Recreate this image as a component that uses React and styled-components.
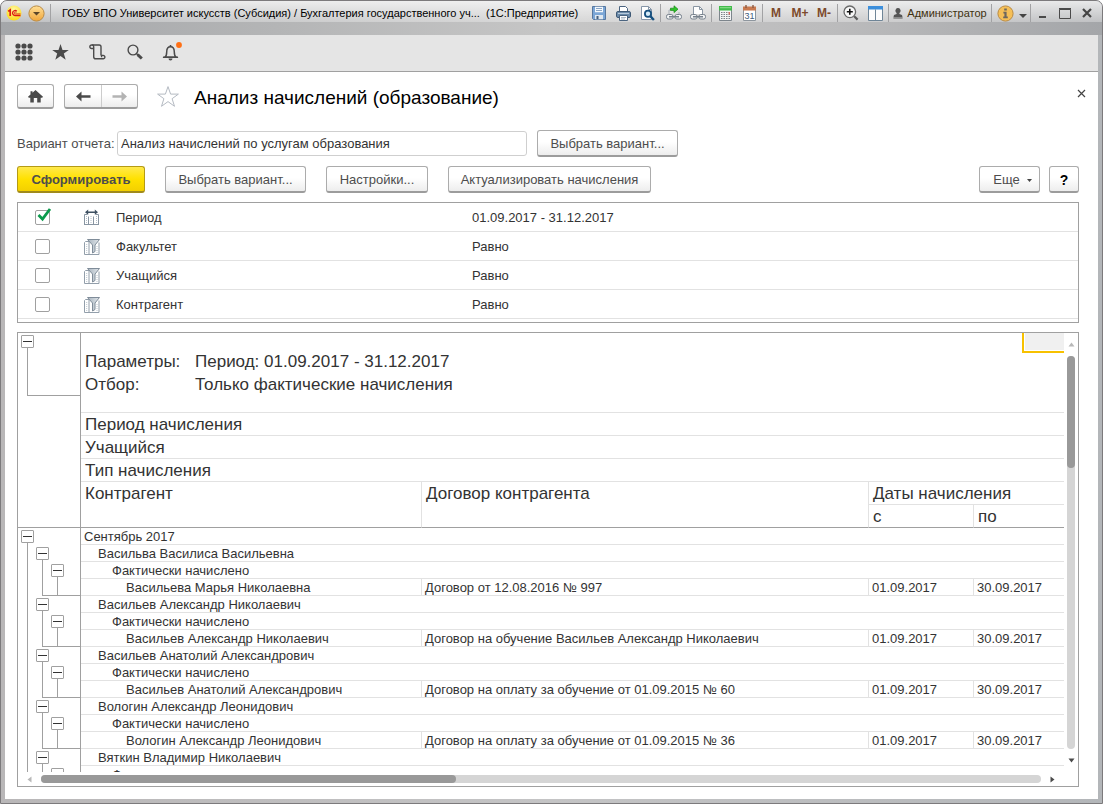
import React, { useState } from 'react';
import styled, { createGlobalStyle, css } from 'styled-components';

const colors = {
  text: '#333333',
  muted: '#4d4d4d',
  border: '#a0a0a0',
  line: '#e2e2e2',
  icon: '#4a4a4a',
};

const GlobalStyle = createGlobalStyle`
  *, *::before, *::after {
    box-sizing: border-box;
  }
  body {
    margin: 0;
    background: #ffffff;
    color: ${colors.text};
    font: 13px/16px "Liberation Sans", Arial, sans-serif;
  }
  button, input {
    font: inherit;
    color: inherit;
    margin: 0;
  }
  svg {
    display: block;
  }
`;

const Window = styled.div`
  display: flex;
  flex-direction: column;
  height: 100vh;
  min-height: 480px;
  padding: 0 4px 4px;
  border: 1px solid #7c7a7c;
  border-radius: 7px 7px 0 0;
  background: linear-gradient(90deg, #b9b7b8, #c4c4c5 50%, #b3b6b9);
  overflow: hidden;
`;

/* title bar */

const TitleBar = styled.header`
  display: flex;
  align-items: flex-start;
  flex: none;
  height: 34px;
  margin: 0 -4px;
  padding: 0 4px;
  color: #1a1a1a;
  font-size: 11px;
  background:
    linear-gradient(rgba(255, 255, 255, 0.75), rgba(255, 255, 255, 0.3)) 0 0 / 100% 21px no-repeat,
    linear-gradient(90deg, #a4a6a9, #b4b5b6 25%, #c6c6c6 50%, #bcbcbd 75%, #a4a6a9);
`;

const BarGroup = styled.div`
  display: flex;
  align-items: center;
  flex: none;
  height: 24px;
`;

const WindowTitle = styled.h1`
  flex: 1;
  min-width: 0;
  margin: 0;
  padding-left: 10px;
  overflow: hidden;
  white-space: nowrap;
  text-overflow: ellipsis;
  color: #000000;
  font-size: 11px;
  font-weight: 400;
  line-height: 24px;
`;

const Separator = styled.span`
  width: 1px;
  height: 18px;
  margin: 0 1px;
  background: #a2a2a4;
`;

const BarButton = styled.button`
  display: flex;
  align-items: center;
  justify-content: center;
  gap: 4px;
  width: ${props => props.$width || 24}px;
  height: 24px;
  padding: 0;
  border: 0;
  background: none;
  color: ${props => props.$color || 'inherit'};
  white-space: nowrap;
`;

const MemoryButton = styled(BarButton)`
  color: #7d4a2c;
  font-size: 12px;
  font-weight: 700;
`;

/* sections bar */

const SectionBar = styled.nav`
  display: flex;
  align-items: center;
  flex: none;
  height: 37px;
  padding-bottom: 2px;
  border-bottom: 1px solid ${colors.border};
  background: #e5e5e5;
`;

const SectionButton = styled.button`
  display: flex;
  align-items: center;
  justify-content: center;
  width: 37px;
  height: 32px;
  padding: 0;
  border: 0;
  background: none;
`;

/* form */

const Form = styled.main`
  display: flex;
  flex-direction: column;
  flex: 1;
  min-height: 0;
  padding: 12px 19px 12px 12px;
  background: #ffffff;
`;

const HeadRow = styled.div`
  display: flex;
  align-items: center;
  flex: none;
  height: 25px;
  margin-right: -7px;
`;

const buttonLook = css`
  border: 1px solid #acacac;
  border-bottom: 2px solid #9c9c9c;
  border-radius: 3px;
  background: linear-gradient(#ffffff 45%, #ededed);
`;

const IconButton = styled.button`
  ${buttonLook}
  display: flex;
  align-items: center;
  justify-content: center;
  width: 37px;
  height: 25px;
  padding: 0;
`;

const History = styled.div`
  ${buttonLook}
  display: flex;
  height: 25px;
  margin-left: 10px;
`;

const HistoryButton = styled.button`
  display: flex;
  align-items: center;
  justify-content: center;
  width: 36px;
  padding: 0;
  border: 0;
  background: none;
  & + & {
    border-left: 1px solid #cccccc;
  }
`;

const PlainButton = styled.button`
  display: flex;
  padding: 0;
  border: 0;
  background: none;
`;

const FavoriteButton = styled(PlainButton)`
  margin-left: 18px;
`;

const CloseFormButton = styled(PlainButton)`
  align-self: flex-start;
  padding-top: 5px;
`;

const FormTitle = styled.h2`
  flex: 1;
  margin: 0 0 0 14px;
  padding-top: 2px;
  color: #000000;
  font-size: 19px;
  font-weight: 400;
  line-height: 24px;
  white-space: nowrap;
`;

const VariantRow = styled.div`
  display: flex;
  align-items: center;
  flex: none;
  margin-top: 21px;
  color: ${colors.muted};
`;

const VariantLabel = styled.label`
  flex: none;
  width: 100px;
  white-space: nowrap;
`;

const VariantInput = styled.input`
  width: 410px;
  height: 25px;
  margin-right: 10px;
  padding: 0 3px;
  border: 1px solid #cfcfcf;
  border-radius: 3px;
  color: ${colors.text};
  background: #ffffff;
`;

const CommandRow = styled.div`
  display: flex;
  flex: none;
  gap: 20px;
  margin-top: 9px;
`;

const CommandEnd = styled.div`
  display: flex;
  gap: 9px;
  margin-left: auto;
`;

const Button = styled.button`
  ${buttonLook}
  display: flex;
  align-items: center;
  justify-content: center;
  gap: 7px;
  flex: none;
  width: ${props => props.$width}px;
  height: 27px;
  padding: 2px 0 0;
  color: ${colors.muted};
  white-space: nowrap;
`;

const PrimaryButton = styled(Button)`
  border-color: #b59b14;
  border-bottom-color: #a08a1c;
  background: linear-gradient(#ffe94d, #ffe100 50%, #f3d000);
  font-weight: 700;
`;

const MoreButton = styled(Button)`
  padding-left: 6px;
`;

const HelpButton = styled(Button)`
  color: #000000;
  font-size: 14px;
  font-weight: 700;
`;

/* filters */

const FilterBox = styled.div`
  flex: none;
  margin-top: 9px;
  padding-bottom: 3px;
  border: 1px solid ${colors.border};
`;

const FilterTable = styled.table`
  width: 100%;
  border-spacing: 0;
  table-layout: fixed;
`;

const FilterCell = styled.td`
  width: ${props => (props.$width ? `${props.$width}px` : 'auto')};
  height: 29px;
  padding: ${props => (props.$text ? 2 : 0)}px 0 0 ${props => props.$indent || 0}px;
  border-bottom: 1px solid ${colors.line};
`;

const CheckWrap = styled.span`
  display: block;
  position: relative;
  width: 15px;
  height: 15px;
  svg {
    position: absolute;
    left: 2px;
    top: -2px;
    pointer-events: none;
  }
`;

const Checkbox = styled.input`
  display: block;
  appearance: none;
  width: 15px;
  height: 15px;
  border: 1px solid ${colors.border};
  border-radius: 2px;
  background: #ffffff;
`;

/* report */

const ReportBox = styled.section`
  display: grid;
  grid-template-columns: minmax(0, 1fr) 14px;
  grid-template-rows: minmax(0, 1fr) 14px;
  flex: 1;
  min-height: 0;
  margin-top: 9px;
  border: 1px solid ${colors.border};
`;

const ReportView = styled.div`
  position: relative;
  overflow: hidden;
`;

const ActiveCell = styled.span`
  position: absolute;
  top: 0;
  right: 0;
  width: 42px;
  height: 20px;
  border: solid #f7c100;
  border-width: 0 0 2px 2px;
  background: #f0f0f0;
  box-shadow: inset 1px -1px #ffffff;
`;

const ReportTable = styled.table`
  width: 100%;
  border-spacing: 0;
  table-layout: fixed;
`;

const TreeCell = styled.td`
  height: ${props => props.$height}px;
  padding: 0;
  border-right: 1px solid ${colors.border};
  border-bottom: ${props => (props.$last ? `1px solid ${colors.border}` : 0)};
`;

const Tree = styled.div`
  display: flex;
  height: ${props => props.$height}px;
  padding-left: 2px;
`;

const Slot = styled.div`
  display: flex;
  flex-direction: column;
  align-items: center;
  width: 15px;
`;

const Stem = styled.span`
  flex: 1;
  width: 1px;
  background: ${colors.border};
`;

// closes a group: runs down from the parent node and then right to the edge
const Branch = styled.div`
  display: flex;
  flex: 1;
  margin-left: 7px;
  padding-left: 7px;
  border: solid ${colors.border};
  border-width: 0 0 1px 1px;
`;

const Toggle = styled.button`
  display: flex;
  align-items: center;
  justify-content: center;
  width: 13px;
  height: 13px;
  margin-top: 2px;
  padding: 0;
  border: 1px solid ${colors.border};
  border-radius: 1px;
  background: #ffffff;
  &::before {
    content: '';
    width: 9px;
    height: 1px;
    background: #333333;
  }
`;

const cellLine = props => {
  if (props.$line === 'none') return 'transparent';
  return props.$line === 'dark' ? colors.border : colors.line;
};

const HeadCell = styled.th`
  height: ${props => props.$height || 23}px;
  padding: 1px 4px 0;
  border-bottom: 1px solid ${cellLine};
  border-right: ${props => (props.$divider ? `1px solid ${colors.line}` : 0)};
  font-size: 17px;
  font-weight: 400;
  line-height: 21px;
  text-align: left;
  vertical-align: top;
  white-space: nowrap;
`;

const ParamName = styled.span`
  display: inline-block;
  width: 110px;
`;

const Cell = styled.td`
  height: 17px;
  padding: 1px 0 0 ${props => 3 + (props.$level || 0) * 14}px;
  border-bottom: 1px solid ${colors.line};
  border-right: ${props => (props.$divider ? `1px solid ${colors.line}` : 0)};
  line-height: 15px;
  white-space: nowrap;
`;

const ScrollBar = styled.div`
  display: flex;
  flex-direction: ${props => (props.$vertical ? 'column' : 'row')};
  align-items: center;
`;

const ScrollButton = styled.button`
  display: flex;
  align-items: center;
  justify-content: center;
  flex: none;
  width: ${props => (props.$vertical ? 14 : 23)}px;
  height: ${props => (props.$vertical ? 23 : 14)}px;
  padding: 0;
  border: 0;
  background: none;
`;

const ScrollTrack = styled.div`
  flex: 1;
  width: ${props => (props.$vertical ? '8px' : 'auto')};
  height: ${props => (props.$vertical ? 'auto' : '8px')};
  border-radius: 4px;
  background: #d5d5d5;
`;

const ScrollThumb = styled.div`
  width: ${props => (props.$vertical ? '8px' : '41.5%')};
  height: ${props => (props.$vertical ? '28.5%' : '8px')};
  border-radius: 4px;
  background: #999999;
`;

/* icons */

const LogoIcon = () => (
  <svg width="16" height="16" viewBox="0 0 16 16">
    <defs>
      <radialGradient id="logo" cx="50%" cy="30%" r="70%">
        <stop offset="0" stopColor="#fff9a8" />
        <stop offset="1" stopColor="#fbd916" />
      </radialGradient>
    </defs>
    <circle cx="8" cy="8" r="7.5" fill="url(#logo)" />
    <path d="M2.2 6.4 4.2 5v6" fill="none" stroke="#dc1c12" strokeWidth="1.7" />
    <path d="M10.8 6.2A2.5 2.500 0 1 0 9 10.500h5.500" fill="none" stroke="#dc1c12" strokeWidth="1.3" />
    <path d="M10.200 7.700a1 1 0 1 0-.9 1.200h5.200" fill="none" stroke="#dc1c12" strokeWidth=".8" />
  </svg>
);

const MenuIcon = () => (
  <svg width="17" height="17" viewBox="0 0 17 17">
    <defs>
      <linearGradient id="menu" x1="0" y1="0" x2="0" y2="1">
        <stop offset="0" stopColor="#ffdf96" />
        <stop offset="1" stopColor="#f0a63a" />
      </linearGradient>
    </defs>
    <circle cx="8.5" cy="8.5" r="7.6" fill="url(#menu)" stroke="#b98b45" />
    <path d="M5 7h7l-3.5 3.6z" fill="#5b4628" />
  </svg>
);

const SaveIcon = () => (
  <svg width="14" height="14" viewBox="0 0 14 14">
    <path d="M.5.5h13v13h-12l-1-1z" fill="#7ba6d6" stroke="#56779f" />
    <path d="M3 .8h8v5.4H3z" fill="#f4f8fc" />
    <path d="M4 2.5h6M4 4.5h6" stroke="#8aa5c4" />
    <path d="M3 9h8v4.2H3z" fill="#dfe7ef" />
    <path d="M4.5 10h2v3h-2z" fill="#45607f" />
  </svg>
);

const PrintIcon = () => (
  <svg width="15" height="15" viewBox="0 0 15 15">
    <path d="M3.5 5.5v-5h6l2 2v3" fill="#fff" stroke="#4b6480" />
    <rect x=".5" y="5.5" width="14" height="6" rx="1.4" fill="#6d8cab" stroke="#3d5874" />
    <path d="M2 7.5h11" stroke="#b9cbdc" />
    <path d="M3.5 9.5h8v5h-8z" fill="#fff" stroke="#4b6480" />
    <path d="M5 11.5h5M5 13h4" stroke="#9aa8b8" strokeWidth=".8" />
  </svg>
);

const PreviewIcon = () => (
  <svg width="15" height="16" viewBox="0 0 15 16">
    <path d="M1.5 1.5h7l3 3v10h-10z" fill="#fff" stroke="#8696a8" />
    <path d="M8.5 1.5v3h3" fill="none" stroke="#8696a8" />
    <circle cx="8" cy="8.8" r="3.1" fill="#d5ebf8" stroke="#17507f" strokeWidth="1.8" />
    <path d="m10.3 11.2 3.6 3.8" stroke="#17507f" strokeWidth="2.4" />
  </svg>
);

const ChainIcon = () => (
  <g fill="#f2f3f4" stroke="#77818c">
    <rect x=".5" y="9.500" width="6.500" height="4.500" rx="1.800" />
    <rect x="9" y="9.500" width="6.500" height="4.500" rx="1.800" />
    <path d="M3 11.800h10" strokeWidth="1.600" />
  </g>
);

const SendLinkIcon = () => (
  <svg width="16" height="16" viewBox="0 0 16 16">
    <path d="M3 9V5h2M13 9V7" fill="none" stroke="#a9b1b9" />
    <path d="M4.5 3.2H8V.8l4 3.4-4 3.4V5.4H4.5z" fill="#2fc52a" stroke="#168714" strokeWidth=".7" />
    <ChainIcon />
  </svg>
);

const GetLinkIcon = () => (
  <svg width="16" height="16" viewBox="0 0 16 16">
    <path d="M3.5 9V1.5h6l3 3V9" fill="#fff" stroke="#8a96a3" />
    <path d="M9.5 1.5v3h3" fill="none" stroke="#8a96a3" />
    <ChainIcon />
  </svg>
);

const CalculatorIcon = () => (
  <svg width="13" height="15" viewBox="0 0 13 15">
    <path d="M.5.5h12v14H.5z" fill="#f3f4f5" stroke="#7d858c" />
    <path d="M0 0h13v4.600H0z" fill="#43bb4c" />
    <path d="M1 1h11v1.200H1z" fill="#7fdb80" />
    <path d="M2 6.5h9M2 8.5h9M2 10.5h9M2 12.5h9" stroke="#7a8188" strokeDasharray="1.5 1" />
    <path d="M9.6 6h1.4v2.6H9.6z" fill="#e0685c" />
  </svg>
);

const CalendarIcon = () => (
  <svg width="13" height="16" viewBox="0 0 13 16">
    <path d="M.5 2.5h12v13H.5z" fill="#fff" stroke="#8e969e" />
    <path d="M0 1.500h13v4H0z" fill="#c9794f" />
    <path d="M3 0v3M10 0v3" stroke="#8a5a42" strokeWidth="1.4" />
    <text x="6.5" y="13.6" textAnchor="middle" fontSize="9" fill="#3f5c7d">31</text>
  </svg>
);

const ZoomIcon = () => (
  <svg width="16" height="16" viewBox="0 0 16 16">
    <circle cx="6.8" cy="6.8" r="5.8" fill="#f8f8f8" stroke="#6a6a6a" strokeWidth="1.3" />
    <path d="M3.8 6.8h6M6.8 3.8v6" stroke="#111" strokeWidth="1.6" />
    <path d="m11.2 11.2 3.4 3.4" stroke="#5c5c5c" strokeWidth="2.2" />
  </svg>
);

const PanelsIcon = () => (
  <svg width="15" height="15" viewBox="0 0 15 15">
    <path d="M.5 1.5h14v13H.5z" fill="#fcfcfc" stroke="#6f8597" />
    <path d="M0 0h15v3.4H0z" fill="#3d8fdc" />
    <path d="M7.5 3.4V14" stroke="#6f8597" />
  </svg>
);

const UserIcon = () => (
  <svg width="10" height="11" viewBox="0 0 10 11">
    <path d="M5 0a2.5 2.7 0 0 1 1.4 5v1l2.6 1 .6 2.5H.4L1 7l2.6-1V5A2.5 2.7 0 0 1 5 0z" fill="#555" />
    <path d="M.4 10.2h9.2" stroke="#777" />
  </svg>
);

const InfoIcon = () => (
  <svg width="17" height="17" viewBox="0 0 17 17">
    <circle cx="8.5" cy="8.5" r="7.6" fill="#f5bf57" stroke="#b98b45" />
    <path d="M7.2 3.6h2.6v2H7.2zM6.4 6.8h3.2v4.8h1.2v1.6H6.2v-1.6h1.2V8.4h-1z" fill="#6d675e" />
  </svg>
);

const CaretIcon = () => (
  <svg width="8" height="12" viewBox="0 0 8 12">
    <path d="M0 7h8l-4 4z" fill="#444" />
  </svg>
);

const MinimizeIcon = () => (
  <svg width="12" height="11" viewBox="0 0 12 11">
    <path d="M2 8h7v2H2z" fill="#4a4a4a" />
  </svg>
);

const MaximizeIcon = () => (
  <svg width="12" height="11" viewBox="0 0 12 11">
    <path d="M.5 1.5h11v9H.5z" fill="none" stroke="#4a4a4a" />
    <path d="M0 .5h12" stroke="#4a4a4a" strokeWidth="2" />
  </svg>
);

const CloseIcon = () => (
  <svg width="10" height="10" viewBox="0 0 10 10">
    <path d="m1 1 8 8M9 1 1 9" stroke="#444" strokeWidth="2.2" />
  </svg>
);

const GridIcon = () => (
  <svg width="18" height="18" viewBox="0 0 18 18" fill={colors.icon}>
    {[3, 9, 15].map(y => [3, 9, 15].map(x => <circle key={`${x}-${y}`} cx={x} cy={y} r="2.6" />))}
  </svg>
);

const StarIcon = () => (
  <svg width="17" height="16" viewBox="0 0 17 16">
    <path d="m8.5 0 2 5.9h6.3l-5 3.7 1.9 6.1-5.2-3.7-5.2 3.7 1.9-6.1-5-3.7h6.3z" fill={colors.icon} />
  </svg>
);

const HistoryIcon = () => (
  <svg width="17" height="16" viewBox="0 0 17 16" fill="none" stroke={colors.icon} strokeWidth="1.4">
    <path d="M4.700 4.500H2.600a1.700 1.700 0 1 1 0-3.500h7.600c1.100 0 1.800.7 1.800 1.800v8.700" />
    <path d="M3.200 1c1 0 1.500.7 1.500 1.700v10c0 1.400.7 2.100 1.900 2.100h7.600a1.700 1.700 0 1 0 0-3.400H12.600v1.900" />
  </svg>
);

const SearchIcon = () => (
  <svg width="16" height="16" viewBox="0 0 16 16" fill="none" stroke={colors.icon}>
    <circle cx="6" cy="6" r="4.900" strokeWidth="1.400" />
    <path d="m9.400 9.400 1.600 1.600" strokeWidth="1.400" />
    <path d="m10.600 10.600 4.200 3.900" strokeWidth="3" />
  </svg>
);

const BellIcon = () => (
  <svg width="20" height="20" viewBox="0 0 20 20">
    <path d="M2.800 15.300c1.400-1 1.900-2.600 1.900-5.300 0-3.300 1.500-5.200 3.800-5.200s3.800 1.900 3.800 5.200c0 2.700.5 4.300 1.900 5.300z" fill="none" stroke={colors.icon} strokeWidth="1.500" />
    <path d="M1 15.300h15" stroke={colors.icon} strokeWidth="1.500" />
    <path d="M6.500 16.500h4a2 2 0 0 1-4 0zM7.700 3h1.600v2H7.700z" fill={colors.icon} />
    <circle cx="17" cy="3" r="2.900" fill="#ff6f14" />
  </svg>
);

const HomeIcon = () => (
  <svg width="15" height="13" viewBox="0 0 15 13" fill={colors.icon}>
    <path d="M7.500 0 15 6.800l-.8.9H12.700V12.500H9.200V8H5.800v4.500H2.300V7.700H.8L0 6.800l2.500-2.300V1.200h2v1.500z" />
  </svg>
);

const ArrowIcon = ({ flip, color }) => (
  <svg width="15" height="11" viewBox="0 0 15 11" fill={color}>
    <g transform={flip ? 'translate(15 0) scale(-1 1)' : undefined}>
      <path d="M0 5.500 5.500.500v10z" />
      <path d="M4 4.200h10.500v2.600H4z" />
    </g>
  </svg>
);

const FavoriteIcon = () => (
  <svg width="24" height="23" viewBox="0 0 24 23">
    <path d="m12 1.600 2.600 7.500h7.800l-6.300 4.600 2.400 7.600-6.500-4.700-6.500 4.700 2.400-7.600-6.300-4.600h7.800z" fill="#fff" stroke="#b4bac2" />
  </svg>
);

const CrossIcon = () => (
  <svg width="9" height="9" viewBox="0 0 9 9">
    <path d="m1 1 7 7M8 1 1 8" stroke="#444" strokeWidth="1.200" />
  </svg>
);

const SmallCaret = () => (
  <svg width="5" height="3" viewBox="0 0 5 3">
    <path d="M0 0h5L2.500 3z" fill="#444" />
  </svg>
);

const CheckIcon = () => (
  <svg width="15" height="14" viewBox="0 0 15 14">
    <path d="m1.500 7 4 4L13 1" fill="none" stroke="#0b9a4c" strokeWidth="2.800" />
  </svg>
);

const PeriodIcon = () => (
  <svg width="15" height="16" viewBox="0 0 15 16">
    <path d="M.5 4.500h14v11H.5z" fill="#fff" />
    <path d="M.5 15.500v-10h3M14.500 15.500v-10h-3M4.500 15.500v-8M9.500 15.500v-8M0 15.500h15" fill="none" stroke="#8895a2" />
    <path d="M2.500 7v8M7 7v8M12.500 7v8" stroke="#b4bec8" strokeDasharray="1 1" />
    <path d="M1 3.200 4.200.6v1.900h6.600V.6L14 3.200l-3.200 2.600V3.900H4.200v1.900z" fill="#3f5162" />
  </svg>
);

const FilterIcon = () => (
  <svg width="16" height="17" viewBox="0 0 16 17">
    <defs>
      <linearGradient id="funnel" x1="0" y1="0" x2="1" y2="0">
        <stop offset="0" stopColor="#a9b5c0" />
        <stop offset="1" stopColor="#e1e6ea" />
      </linearGradient>
    </defs>
    <path d="M.5 16.500V4.500l1-1h3.500v13zM5 16.500h10v-12" fill="#fff" stroke="#929eaa" />
    <path d="M2.700 6v10M13 8v8" stroke="#bcc5cd" strokeDasharray="1 1" />
    <path d="M3.500 1.500h12L11 7v6.500l-2.500 1.500V7z" fill="url(#funnel)" stroke="#7f8c99" />
  </svg>
);

const rotation = { up: 0, right: 90, down: 180, left: 270 };

const ScrollArrow = ({ to, color }) => (
  <svg width="7" height="7" viewBox="0 0 7 7">
    <path d="M3.500 1.500 6.500 5.500h-6z" fill={color} transform={`rotate(${rotation[to]} 3.500 3.500)`} />
  </svg>
);

/* data */

const filters = [
  { name: 'Период', value: '01.09.2017 - 31.12.2017', checked: true, Icon: PeriodIcon },
  { name: 'Факультет', value: 'Равно', Icon: FilterIcon },
  { name: 'Учащийся', value: 'Равно', Icon: FilterIcon },
  { name: 'Контрагент', value: 'Равно', Icon: FilterIcon },
];

const students = [
  { name: 'Васильва Василиса Васильевна', payer: 'Васильева Марья Николаевна', contract: 'Договор от 12.08.2016 № 997' },
  { name: 'Васильев Александр Николаевич', payer: 'Васильев Александр Николаевич', contract: 'Договор на обучение Васильев Александр Николаевич' },
  { name: 'Васильев Анатолий Александрович', payer: 'Васильев Анатолий Александрович', contract: 'Договор на оплату за обучение от 01.09.2015 № 60' },
  { name: 'Вологин Александр Леонидович', payer: 'Вологин Александр Леонидович', contract: 'Договор на оплату за обучение от 01.09.2015 № 36' },
  { name: 'Вяткин Владимир Николаевич' },
];

const StemSlot = () => <Slot><Stem /></Slot>;

const ToggleSlot = () => (
  <Slot>
    <Toggle type="button" aria-label="Свернуть" />
    <Stem />
  </Slot>
);

const TreeColumn = ({ height = 17, last, children }) => (
  <TreeCell $height={height} $last={last}>
    {children && <Tree $height={height}>{children}</Tree>}
  </TreeCell>
);

const FilterRow = ({ filter }) => {
  const [checked, setChecked] = useState(!!filter.checked);
  const { name, value, Icon } = filter;

  return (
    <tr>
      <FilterCell $width={66} $indent={17}>
        <CheckWrap>
          <Checkbox
            type="checkbox"
            id={`filter-${name}`}
            checked={checked}
            onChange={e => setChecked(e.target.checked)}
          />
          {checked && <CheckIcon />}
        </CheckWrap>
      </FilterCell>
      <FilterCell $width={32}><Icon /></FilterCell>
      <FilterCell $width={356} $text><label htmlFor={`filter-${name}`}>{name}</label></FilterCell>
      <FilterCell $text>{value}</FilterCell>
    </tr>
  );
};

const StudentRows = ({ student }) => (
  <>
    <tr>
      <TreeColumn><StemSlot /><ToggleSlot /></TreeColumn>
      <Cell colSpan={4} $level={1}>{student.name}</Cell>
    </tr>
    <tr>
      <TreeColumn><StemSlot /><StemSlot /><ToggleSlot /></TreeColumn>
      <Cell colSpan={4} $level={2}>Фактически начислено</Cell>
    </tr>
    {student.payer && (
      <tr>
        <TreeColumn><StemSlot /><Branch><StemSlot /></Branch></TreeColumn>
        <Cell $level={3} $divider>{student.payer}</Cell>
        <Cell $divider>{student.contract}</Cell>
        <Cell $divider>01.09.2017</Cell>
        <Cell>30.09.2017</Cell>
      </tr>
    )}
  </>
);

const ReportHead = () => (
  <thead>
    <tr>
      <TreeColumn><ToggleSlot /></TreeColumn>
      <HeadCell as="td" colSpan={4} $height={17} $line="none" />
    </tr>
    <tr>
      <TreeColumn height={23}><StemSlot /></TreeColumn>
      <HeadCell as="td" colSpan={4} $line="none"><ParamName>Параметры:</ParamName>Период: 01.09.2017 - 31.12.2017</HeadCell>
    </tr>
    <tr>
      <TreeColumn height={23}><Branch /></TreeColumn>
      <HeadCell as="td" colSpan={4} $line="none"><ParamName>Отбор:</ParamName>Только фактические начисления</HeadCell>
    </tr>
    <tr>
      <TreeColumn />
      <HeadCell as="td" colSpan={4} $height={17} />
    </tr>
    {['Период начисления', 'Учащийся', 'Тип начисления'].map(title => (
      <tr key={title}>
        <TreeColumn height={23} />
        <HeadCell colSpan={4}>{title}</HeadCell>
      </tr>
    ))}
    <tr>
      <TreeColumn height={23} />
      <HeadCell rowSpan={2} $line="dark" $divider>Контрагент</HeadCell>
      <HeadCell rowSpan={2} $line="dark" $divider>Договор контрагента</HeadCell>
      <HeadCell colSpan={2}>Даты начисления</HeadCell>
    </tr>
    <tr>
      <TreeColumn height={23} last />
      <HeadCell $line="dark" $divider>с</HeadCell>
      <HeadCell $line="dark">по</HeadCell>
    </tr>
  </thead>
);

const App = () => {
  const [variant, setVariant] = useState('Анализ начислений по услугам образования');

  return (
    <>
      <GlobalStyle />
      <Window>
        <TitleBar>
          <BarGroup>
            <BarButton $width={18} aria-label="1С"><LogoIcon /></BarButton>
            <BarButton $width={26} aria-label="Меню"><MenuIcon /></BarButton>
            <Separator />
          </BarGroup>
          <WindowTitle>ГОБУ ВПО Университет искусств (Субсидия) / Бухгалтерия государственного уч...  &nbsp;(1С:Предприятие)</WindowTitle>
          <BarGroup>
            <BarButton aria-label="Сохранить"><SaveIcon /></BarButton>
            <BarButton aria-label="Печать"><PrintIcon /></BarButton>
            <BarButton aria-label="Просмотр"><PreviewIcon /></BarButton>
            <Separator />
            <BarButton aria-label="Перейти по ссылке"><SendLinkIcon /></BarButton>
            <BarButton aria-label="Получить ссылку"><GetLinkIcon /></BarButton>
            <Separator />
            <BarButton aria-label="Калькулятор"><CalculatorIcon /></BarButton>
            <BarButton aria-label="Календарь"><CalendarIcon /></BarButton>
            <Separator />
            <MemoryButton>M</MemoryButton>
            <MemoryButton>M+</MemoryButton>
            <MemoryButton>M-</MemoryButton>
            <Separator />
            <BarButton aria-label="Масштаб"><ZoomIcon /></BarButton>
            <BarButton aria-label="Панели"><PanelsIcon /></BarButton>
            <Separator />
            <BarButton $width={100} $color="#40310f"><UserIcon />Администратор</BarButton>
            <Separator />
            <BarButton aria-label="О программе"><InfoIcon /></BarButton>
            <BarButton $width={12} aria-label="Ещё"><CaretIcon /></BarButton>
            <Separator />
            <BarButton $width={22} aria-label="Свернуть"><MinimizeIcon /></BarButton>
            <BarButton $width={22} aria-label="Развернуть"><MaximizeIcon /></BarButton>
            <BarButton $width={22} aria-label="Закрыть"><CloseIcon /></BarButton>
          </BarGroup>
        </TitleBar>

        <SectionBar>
          <SectionButton aria-label="Функции"><GridIcon /></SectionButton>
          <SectionButton aria-label="Избранное"><StarIcon /></SectionButton>
          <SectionButton aria-label="История"><HistoryIcon /></SectionButton>
          <SectionButton aria-label="Поиск"><SearchIcon /></SectionButton>
          <SectionButton aria-label="Оповещения"><BellIcon /></SectionButton>
        </SectionBar>

        <Form>
          <HeadRow>
            <IconButton aria-label="Домой"><HomeIcon /></IconButton>
            <History>
              <HistoryButton aria-label="Назад"><ArrowIcon color={colors.icon} /></HistoryButton>
              <HistoryButton aria-label="Вперед"><ArrowIcon flip color="#b3b3b3" /></HistoryButton>
            </History>
            <FavoriteButton aria-label="В избранное"><FavoriteIcon /></FavoriteButton>
            <FormTitle>Анализ начислений (образование)</FormTitle>
            <CloseFormButton aria-label="Закрыть"><CrossIcon /></CloseFormButton>
          </HeadRow>

          <VariantRow>
            <VariantLabel htmlFor="variant">Вариант отчета:</VariantLabel>
            <VariantInput id="variant" value={variant} onChange={e => setVariant(e.target.value)} />
            <Button $width={141}>Выбрать вариант...</Button>
          </VariantRow>

          <CommandRow>
            <PrimaryButton $width={128}>Сформировать</PrimaryButton>
            <Button $width={141}>Выбрать вариант...</Button>
            <Button $width={102}>Настройки...</Button>
            <Button $width={203}>Актуализировать начисления</Button>
            <CommandEnd>
              <MoreButton $width={61}>Еще <SmallCaret /></MoreButton>
              <HelpButton $width={30}>?</HelpButton>
            </CommandEnd>
          </CommandRow>

          <FilterBox>
            <FilterTable>
              <tbody>
                {filters.map(filter => <FilterRow key={filter.name} filter={filter} />)}
              </tbody>
            </FilterTable>
          </FilterBox>

          <ReportBox>
            <ReportView>
              <ReportTable>
                <colgroup>
                  <col width="63" />
                  <col width="341" />
                  <col />
                  <col width="105" />
                  <col width="90" />
                </colgroup>
                <ReportHead />
                <tbody>
                  <tr>
                    <TreeColumn><ToggleSlot /></TreeColumn>
                    <Cell colSpan={4}>Сентябрь 2017</Cell>
                  </tr>
                  {students.map(student => <StudentRows key={student.name} student={student} />)}
                </tbody>
              </ReportTable>
              <ActiveCell />
            </ReportView>
            <ScrollBar $vertical>
              <ScrollButton $vertical aria-label="Вверх"><ScrollArrow to="up" color="#b8b8b8" /></ScrollButton>
              <ScrollTrack $vertical><ScrollThumb $vertical /></ScrollTrack>
              <ScrollButton $vertical aria-label="Вниз"><ScrollArrow to="down" color="#4a4a4a" /></ScrollButton>
            </ScrollBar>
            <ScrollBar>
              <ScrollButton aria-label="Влево"><ScrollArrow to="left" color="#b8b8b8" /></ScrollButton>
              <ScrollTrack><ScrollThumb /></ScrollTrack>
              <ScrollButton aria-label="Вправо"><ScrollArrow to="right" color="#4a4a4a" /></ScrollButton>
            </ScrollBar>
          </ReportBox>
        </Form>
      </Window>
    </>
  );
};

export default App;
